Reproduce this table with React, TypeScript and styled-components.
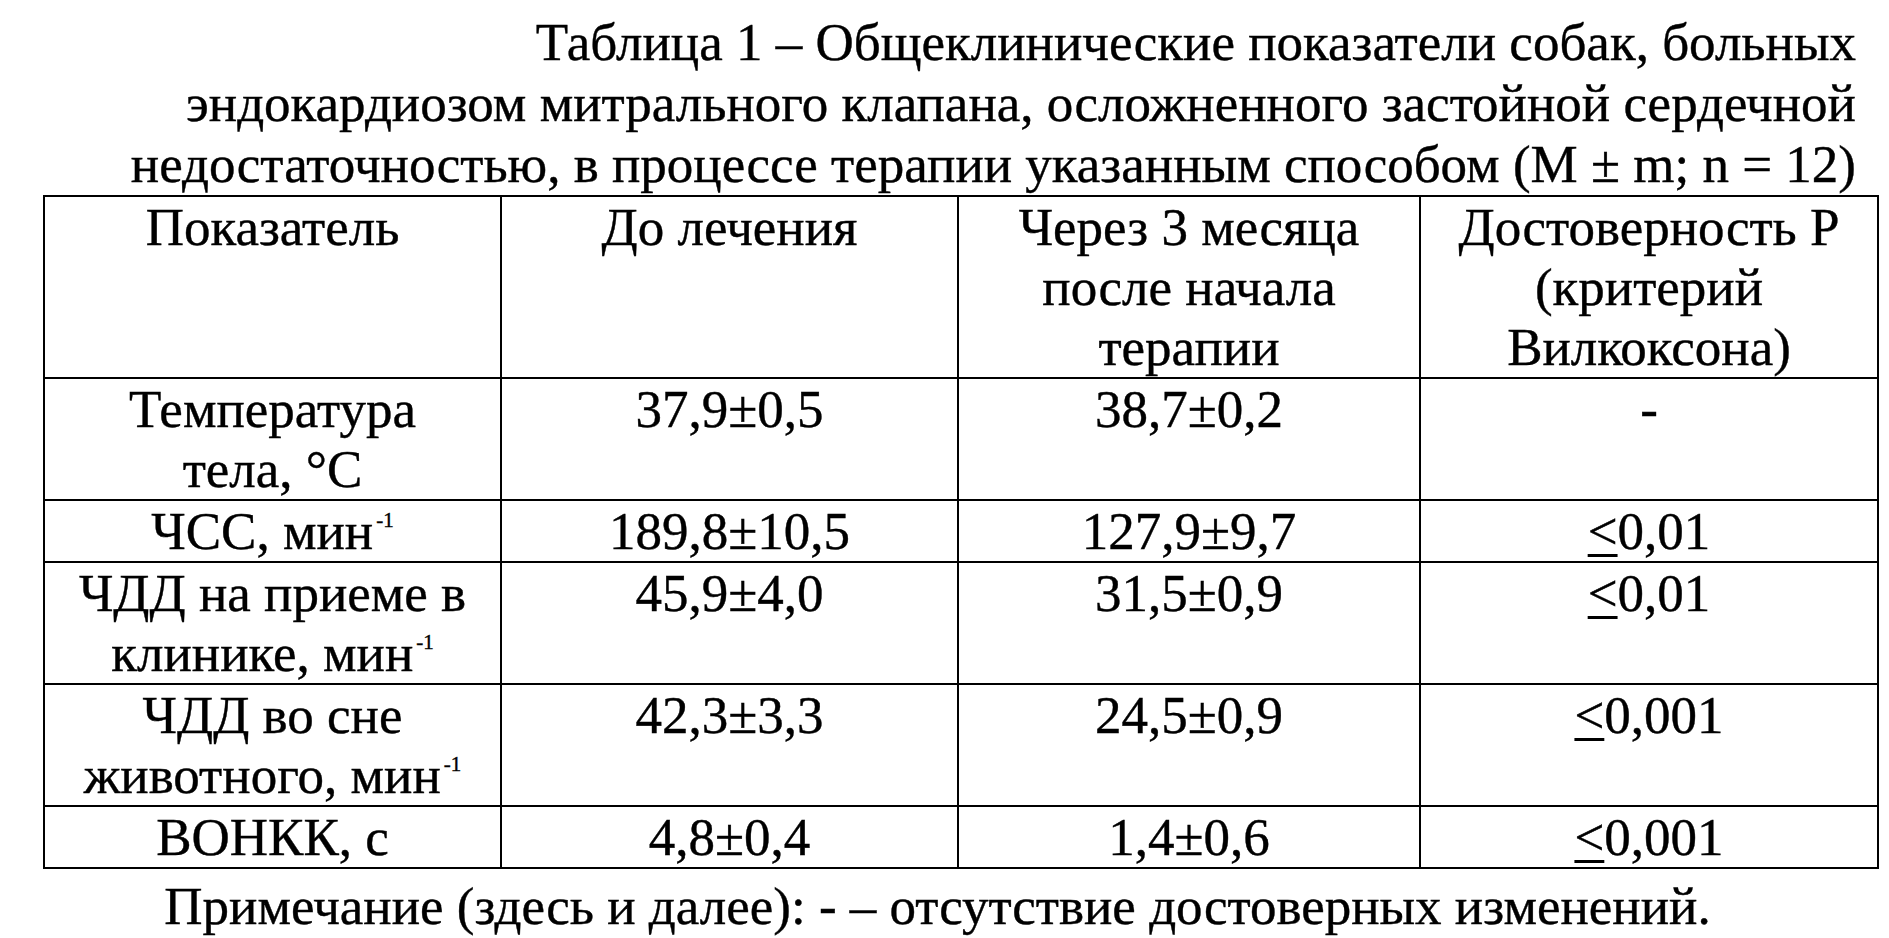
import React from "react";
import styled, {createGlobalStyle} from "styled-components";

const GlobalStyle = createGlobalStyle`
  html, body {
    margin: 0;
    padding: 0;
    background: #fff;
  }
  body {
    color: #000;
    font-family: "Liberation Serif", "Times New Roman", serif;
    font-size: 53px;
    -webkit-text-stroke: 0.4px #000;
  }
`;

const Page = styled.div`
  width: 1889px;
  height: 938px;
  overflow: hidden;
  padding-top: 12px;
  box-sizing: border-box;
`;

const Caption = styled.div`
  margin-left: 43px;
  width: 1834px;
  padding-right: 21px;
  box-sizing: border-box;
  text-align: right;
  line-height: 61px;
  white-space: nowrap;
`;

const Table = styled.table`
  margin-left: 43px;
  width: 1834px;
  border-collapse: collapse;
  table-layout: fixed;
`;

const Cell = styled.td`
  border: 2px solid #000;
  padding: 0;
  text-align: center;
  vertical-align: top;
  line-height: 60px;
  white-space: nowrap;
`;

const Sup = styled.sup`
  font-size: 21px;
  line-height: 0;
  vertical-align: 22px;
  margin-left: 3px;
`;

const Le = styled.span`
  text-decoration: underline;
  text-decoration-thickness: 3px;
  text-underline-offset: 5px;
`;

const Note = styled.div`
  margin-top: 7px;
  padding-right: 14px;
  text-align: center;
  line-height: 60px;
  white-space: nowrap;
`;

const Min = () => (
    <>мин<Sup>-1</Sup></>
);

type Row = {
    name: React.ReactNode;
    before: string;
    after: string;
    p: React.ReactNode;
};

const rows: Row[] = [
    {name: <>Температура<br/>тела, °С</>, before: "37,9±0,5", after: "38,7±0,2", p: "-"},
    {name: <>ЧСС, <Min/></>, before: "189,8±10,5", after: "127,9±9,7", p: <><Le>&lt;</Le>0,01</>},
    {name: <>ЧДД на приеме в<br/>клинике, <Min/></>, before: "45,9±4,0", after: "31,5±0,9", p: <><Le>&lt;</Le>0,01</>},
    {name: <>ЧДД во сне<br/>животного, <Min/></>, before: "42,3±3,3", after: "24,5±0,9", p: <><Le>&lt;</Le>0,001</>},
    {name: <>ВОНКК, с</>, before: "4,8±0,4", after: "1,4±0,6", p: <><Le>&lt;</Le>0,001</>},
];

const App: React.FC = () => {
    return (
        <Page>
            <GlobalStyle/>
            <Caption>
                Таблица 1 – Общеклинические показатели собак, больных<br/>
                эндокардиозом митрального клапана, осложненного застойной сердечной<br/>
                недостаточностью, в процессе терапии указанным способом (М ± m; n = 12)
            </Caption>
            <Table>
                <colgroup>
                    <col style={{width: 457}}/>
                    <col style={{width: 457}}/>
                    <col style={{width: 462}}/>
                    <col style={{width: 458}}/>
                </colgroup>
                <tbody>
                    <tr>
                        <Cell>Показатель</Cell>
                        <Cell>До лечения</Cell>
                        <Cell>Через 3 месяца<br/>после начала<br/>терапии</Cell>
                        <Cell>Достоверность Р<br/>(критерий<br/>Вилкоксона)</Cell>
                    </tr>
                    {rows.map((r, i) => (
                        <tr key={i}>
                            <Cell>{r.name}</Cell>
                            <Cell>{r.before}</Cell>
                            <Cell>{r.after}</Cell>
                            <Cell>{r.p}</Cell>
                        </tr>
                    ))}
                </tbody>
            </Table>
            <Note>Примечание (здесь и далее): - – отсутствие достоверных изменений.</Note>
        </Page>
    );
};

export default App;
